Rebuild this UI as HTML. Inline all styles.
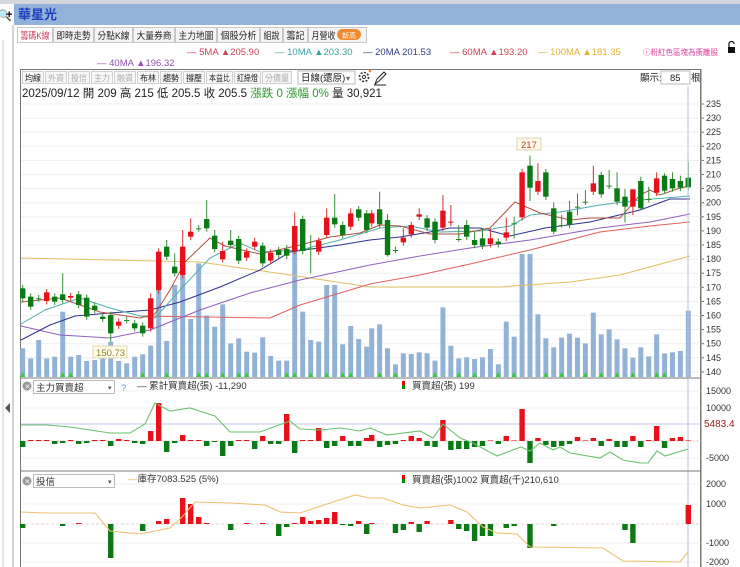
<!DOCTYPE html>
<html><head><meta charset="utf-8"><style>
html,body{margin:0;padding:0;background:#fff;}
svg{display:block;font-family:"Liberation Sans","Noto Sans CJK TC",sans-serif;}
</style></head><body>
<svg id="s" width="740" height="567" viewBox="0 0 740 567" xmlns="http://www.w3.org/2000/svg">
<rect width="740" height="567" fill="#fff"/>
<rect x="0" y="0" width="740" height="4" fill="#d4d6dc"/>
<rect x="0" y="4" width="740" height="21" fill="#93b2da"/>
<rect x="0" y="4" width="14" height="21" fill="#fff"/>
<text x="-2" y="19" font-size="11" fill="#333">🔍</text><text x="6" y="18" font-size="11" font-weight="bold" fill="#000">+</text>
<text x="18" y="19" font-size="13" font-weight="bold" fill="#1f3fbf">華星光</text>
<line x1="13" y1="25" x2="13" y2="567" stroke="#aaa"/>
<line x1="3" y1="40" x2="3" y2="567" stroke="#ccc"/>
<path d="M5 408 L10 403 L10 413 Z" fill="#555"/>
<g id="tabs" font-size="9.5"></g>
<g font-size="9.5">
<text x="187" y="55" fill="#d04050">—   5MA ▲205.90</text>
<text x="275" y="55" fill="#40a0a0">—   10MA ▲203.30</text>
<text x="363" y="55" fill="#303a8a">—   20MA 201.53</text>
<text x="450" y="55" fill="#d04050">—   60MA ▲193.20</text>
<text x="538" y="55" fill="#e0b030">—   100MA ▲181.35</text>
<text x="97" y="66" fill="#9050b0">—   40MA ▲196.32</text>
<text x="643" y="55" fill="#e040a0" font-size="8" textLength="75" lengthAdjust="spacingAndGlyphs">ⓘ粉紅色區塊為衝離股</text>
</g>
<rect x="728" y="47" width="7" height="6" fill="#111"/><path d="M729 47 V44 a2.5 2.5 0 0 1 5 0" fill="none" stroke="#111" stroke-width="1.2"/>
<rect x="20.5" y="69.5" width="680" height="500" fill="none" stroke="#777"/>
<g id="tool" font-size="8.5"></g>
<rect x="298" y="71" width="57" height="13" fill="#fff" stroke="#bbb"/>
<text x="301" y="81" font-size="9.5" fill="#222">日線(還原)</text><text x="346" y="81" font-size="8" fill="#666">▾</text>
<circle cx="364" cy="77" r="4.5" fill="none" stroke="#333" stroke-width="1.6" stroke-dasharray="2 1.5"/><circle cx="364" cy="77" r="1.6" fill="none" stroke="#333"/>
<circle cx="370" cy="71" r="1.3" fill="#f08020"/>
<path d="M375 84 L377 79 L384 72 L386 74 L379 81 Z M374 85 H386" fill="none" stroke="#222" stroke-width="1"/>
<text x="640" y="81" font-size="9.5" fill="#222">顯示:</text>
<rect x="661" y="71" width="29" height="13" fill="#fff" stroke="#bbb"/>
<text x="670" y="81" font-size="9.5" fill="#222">85</text><text x="691" y="81" font-size="9.5" fill="#222">根</text>
<text x="22" y="97" font-size="11.5" fill="#222">2025/09/12 開 209 高 215 低 205.5 收 205.5 <tspan fill="#2a9a2a">漲跌 0 漲幅 0%</tspan> 量 30,921</text>
<g id="grid"></g>
<g id="vol"></g>
<g id="ma" fill="none" stroke-width="1"></g>
<g id="cdl"></g>
<line x1="688" y1="86" x2="688" y2="567" stroke="#b8c4d8"/>
<line x1="701" y1="69" x2="701" y2="567" stroke="#777"/>
<line x1="20" y1="378" x2="701" y2="378" stroke="#777"/>
<line x1="20" y1="471" x2="701" y2="471" stroke="#777"/>
<g id="ax" font-size="9" fill="#333"></g>
<g id="p2"></g>
<g id="p3"></g>
<rect x="93" y="346" width="34" height="12" fill="#fffbe8" stroke="#e0d8b0"/><text x="96" y="356" font-size="9.5" fill="#8a8a30">150.73</text>
<rect x="517" y="138" width="24" height="12" fill="#fffbe8" stroke="#e0d0b0"/><text x="521" y="148" font-size="9.5" fill="#c04030">217</text>
<circle cx="27" cy="386" r="4.5" fill="#999"/><text x="24.5" y="389" font-size="7" fill="#fff">✕</text>
<rect x="33.5" y="380.5" width="81" height="13" fill="#fff" stroke="#bbb"/><text x="36" y="391" font-size="9.5" fill="#333">主力買賣超</text><text x="108" y="390" font-size="7" fill="#555">▾</text>
<text x="121" y="391" font-size="9.5" fill="#6a9ad0">?</text>
<text x="137" y="389" font-size="9.5" fill="#333">— 累計買賣超(張) -11,290</text>
<rect x="402" y="381" width="3" height="4" fill="#e00"/><rect x="402" y="385" width="3" height="4" fill="#080"/>
<text x="412" y="389" font-size="9.5" fill="#333">買賣超(張) 199</text>
<circle cx="27" cy="481" r="4.5" fill="#999"/><text x="24.5" y="484" font-size="7" fill="#fff">✕</text>
<rect x="33.5" y="474.5" width="81" height="13" fill="#fff" stroke="#bbb"/><text x="36" y="485" font-size="9.5" fill="#333">投信</text><text x="108" y="484" font-size="7" fill="#555">▾</text>
<text x="128" y="482" font-size="9.5" fill="#333"><tspan fill="#e0b040">—</tspan>庫存7083.525 (5%)</text>
<rect x="402" y="475" width="3" height="4" fill="#e00"/><rect x="402" y="479" width="3" height="4" fill="#080"/>
<text x="412" y="483" font-size="9.5" fill="#333">買賣超(張)1002 買賣超(千)210,610</text>
</svg>
<script>
const NS='http://www.w3.org/2000/svg';
function add(g,tag,a,txt){const e=document.createElementNS(NS,tag);for(const k in a)e.setAttribute(k,a[k]);if(txt)e.textContent=txt;document.getElementById(g).appendChild(e);return e;}
const tabs=[["籌碼K線",17,53],["即時走勢",53,94],["分點K線",94,133],["大量券商",133,175],["主力地圖",175,217],["個股分析",217,260],["組說",260,283],["籌記",283,308],["月營收",308,367]];
tabs.forEach((t,i)=>{add('tabs','rect',{x:t[1]+.5,y:27.5,width:t[2]-t[1]-1,height:15,fill:i?'#f5f5f5':'#fff',stroke:'#c8c8c8'});
const w=i==8?24:(t[2]-t[1]-7);
add('tabs','text',{x:t[1]+3.5,y:39,fill:i?'#222':'#d04060',textLength:w,lengthAdjust:'spacingAndGlyphs'},t[0]);});
add('tabs','rect',{x:337,y:29,width:24,height:11,rx:5.5,fill:'#f08a30'});add('tabs','text',{x:342,y:38,fill:'#fff','font-size':7},'新高');
const tb=[["均線",22,44,1],["外資",45,67,0],["投信",68,90,0],["主力",91,113,0],["融資",114,136,0],["布林",137,159,1],["趨勢",160,182,1],["撐壓",183,205,1],["本益比",206,233,1],["紅綠燈",234,261,1],["分價量",262,292,0]];
tb.forEach(t=>{add('tool','rect',{x:t[1]+.5,y:71.5,width:t[2]-t[1]-1,height:12,fill:'#f7f7f7',stroke:'#d0d0d0'});add('tool','text',{x:t[1]+3,y:81,fill:t[3]?'#222':'#aaa',textLength:t[2]-t[1]-6,lengthAdjust:'spacingAndGlyphs'},t[0]);});
const py=p=>104+(235-p)*2.82;
for(let p=140;p<=235;p+=5){const y=py(p);add('grid','line',{x1:21,x2:701,y1:y,y2:y,stroke:'#f0f0f0'});add('ax','line',{x1:701,x2:704,y1:y,y2:y,stroke:'#777'});add('ax','text',{x:706,y:y+3},p);}
[[15000,391],[10000,408],[0,441],[-5000,458]].forEach(a=>add('ax','text',{x:706,y:a[1]+3},a[0]));
add('ax','text',{x:704,y:427,fill:'#a02020','font-size':10},'5483.4');
[[2000,484],[1000,504],[0,524],[-1000,543],[-2000,562]].forEach(a=>add('ax','text',{x:706,y:a[1]+3},a[0]));
[391,408,441,458].forEach(y=>add('grid','line',{x1:21,x2:701,y1:y,y2:y,stroke:'#f0f0f0'}));
add('grid','line',{x1:21,x2:701,y1:424,y2:424,stroke:'#c0c8e8'});
[484,504,543,562].forEach(y=>add('grid','line',{x1:21,x2:701,y1:y,y2:y,stroke:'#f0f0f0'}));
add('grid','line',{x1:21,x2:701,y1:524,y2:524,stroke:'#e8d0d0','stroke-dasharray':'3 2'});
add('grid','line',{x1:21,x2:701,y1:441,y2:441,stroke:'#e8d0d0','stroke-dasharray':'3 2'});
const X=k=>k<44?22.7+8*k:371.7+7.915*(k-44);
const Z=z=>95+z/3;
const C=[['g',580,610],['g',605,635],['d',610],['r',592,618],['g',605,620],['g',598,615,535],['r',603,608],['g',598,630],['g',608,665],['g',632,645],['g',665,672],['g',660,715,650,740],['r',680,692],['d',675],['g',685,700],['g',692,715],['r',610,700,595],['r',470,585],['g',455,485,435],['g',515,535,475],['r',455,540,405],['r',410,425,370],['d',400],['g',372,400,315],['g',422,462,405],['r',468,493,440],['g',437,450,405],['g',432,497],['r',470,488],['r',440,455,428],['g',452,505],['r',473,497],['g',465,480],['g',462,482,450],['r',393,468,352],['g',372,468],['d',460,460,420,535],['r',437,470],['r',368,420,340],['g',368,388,297],['g',390,420],['r',355,395,340],['g',343,368],['g',355,405],
['r',355,385],['g',343,388,290],['g',375,480,357,485],['d',465],['r',428,442,400],['r',390,418],['r',358,365,340],['g',370,398],['g',380,435],['r',347,398,300],['r',380,383,330],['d',432,432,390,440],['g',390,425,375],['g',435,450,410],['g',430,452,400],['r',430,447,402],['g',440,447],['r',412,428,368],['d',385,385,365,430],['r',232,367],['g',212,278,182,318],['r',258,290,205],['g',232,305],['g',340,410,322,418],['d',390,390,360,398],['g',350,390,318],['d',335,335,295,360],['d',320,320,285],['r',265,290,212],['g',240,298],['d',272,272,225],['g',280,320,232],['g',305,335,282,382],['r',283,335,283,360],['g',258,340,245,345],['d',312,312,275],['r',250,293,232],['g',242,287,235],['g',252,280,232],['g',258,278,242],['g',248,277,200]];
const V=[760,790,735,790,785,650,785,780,798,795,790,740,798,805,785,778,752,550,738,570,515,672,505,662,695,628,745,730,770,773,727,783,797,797,460,650,735,740,570,570,748,693,732,755,700,688,760,808,775,777,772,775,797,637,752,790,787,792,787,762,808,680,725,477,477,658,730,757,728,716,728,745,653,718,703,733,760,788,757,784,718,775,772,768,647];
V.forEach((v,k)=>{const y=Z(v);add('vol','rect',{x:X(k)-2.5,y:y,width:5,height:377-y,fill:'#93b3d6'});});
[0,5,6,15,18,22,23,25,27,28,33,34,36,38,40,41,45,47,52,55,57,60,62,66,68,71,73,75,77,80,81].forEach(k=>add('vol','path',{d:`M${X(k)-2.5} 377 L${X(k)} 372 L${X(k)+2.5} 377Z`,fill:'#30d030'}));
C.forEach((c,k)=>{const x=X(k);let t=c[1],b=c[2]===undefined?c[1]:c[2];let hi=c[3]!==undefined?c[3]:t-10,lo=c[4]!==undefined?c[4]:b+10;
const col=c[0]=='r'?'#e8101a':(c[0]=='g'?'#0a7a14':'#2a8a2a');const wc=c[0]=='r'?'#d03030':'#3a8a3a';
add('cdl','line',{x1:x,x2:x,y1:Z(hi),y2:Z(lo),stroke:wc,'stroke-width':1});
add('cdl','rect',{x:x-2.7,y:Z(t),width:5.4,height:Math.max(1,(b-t)/3),fill:col});});
const MA=[['#e0c060',[[21,258],[200,262],[290,275],[370,287],[500,287],[570,282],[620,275],[690,256]]],
['#e06060',[[140,316],[270,318],[300,305],[370,284],[420,275],[470,264],[530,250],[600,232],[650,226],[690,222]]],
['#9060c0',[[21,326],[60,335],[110,338],[150,330],[200,310],[250,293],[300,280],[370,265],[420,256],[470,248],[530,240],[600,228],[650,222],[690,214]]],
['#303090',[[21,340],[50,325],[75,316],[110,313],[150,310],[180,302],[220,287],[260,270],[290,252],[340,245],[370,240],[400,237],[430,232],[450,228],[480,228],[510,236],[545,228],[590,222],[640,210],[670,199],[690,199]]],
['#50b0b0',[[21,324],[45,310],[80,298],[110,308],[140,316],[155,318],[180,290],[210,258],[240,243],[260,252],[300,250],[340,240],[380,228],[410,226],[440,232],[480,231],[510,226],[530,215],[560,212],[600,205],[640,200],[690,196]]],
['#b05040',[[21,302],[60,298],[100,312],[140,318],[155,314],[170,290],[185,262],[210,238],[225,246],[260,254],[300,245],[330,237],[360,233],[380,225],[400,226],[430,234],[460,234],[490,228],[515,202],[540,213],[570,220],[590,218],[620,218],[640,195],[650,190],[660,195],[680,188],[690,186]]]];
MA.forEach(m=>add('ma','polyline',{points:m[1].map(p=>p.join(',')).join(' '),stroke:m[0]}));
const P2=[-6,1,1,1,-3,-2,1,-3,-2,1,1,-5,2,1,-2,-3,10,38,-11,-2,6,1,1,-5,-1,-15,-5,1,1,-8,5,-3,-3,27,-12,1,1,13,-7,-5,5,-5,-5,3,6,-6,-4,-3,1,5,3,-5,-6,21,-9,-8,-8,-6,-5,.6,-3,5,.6,32,-22,3,-4,-6,-5,-3,4,.6,3,-5,2,-6,-6,5,-6,1,15,-7,3,4,.6];
P2.forEach((v,k)=>{const x=X(k);add('p2','rect',{x:x-2.7,y:v>0?441-v:441,width:5.4,height:Math.abs(v),fill:v>0?'#e8101a':'#0a7a14'});});
add('p2','polyline',{points:'21,425 47,425 70,427 90,430 110,433 130,433 145,424 155,403 170,411 190,408 215,416 230,432 260,432 290,421 300,429 320,430 340,428 360,431 370,428 387,435 420,431 433,438 443,424 460,438 473,443 497,456 510,451 521,447 530,451 540,443 553,450 560,447 570,453 600,458 610,452 623,460 640,463 648,463 657,451 665,456 688,449',fill:'none',stroke:'#6cc070','stroke-width':1.1});
const P3={0:-4,5:-2,7:1,11:-34,15:-7,17:3,18:5,20:26,21:20,22:7,23:1,26:-6,28:1,30:1,32:-12,33:-3,34:1,35:7,36:3,37:4,38:6,39:12,40:-1,41:-2,42:3,43:-10,44:1,47:-9,48:-6,49:2,50:-8,51:3,54:4,55:-5,56:-7,57:-17,58:-12,59:-12,61:-4,62:-2,64:-24,67:-2,76:-6,77:-19,84:19};
for(const k in P3){const v=P3[k],x=X(+k);add('p3','rect',{x:x-2.7,y:v>0?524-v:524,width:5.4,height:Math.abs(v),fill:v>0?'#e8101a':'#0a7a14'});}
add('p3','polyline',{points:'21,512 45,513 95,513 110,531 140,534 170,528 182,517 195,502 230,503 265,505 280,512 300,513 330,503 355,495 370,498 383,498 403,505 420,508 430,507 450,505 467,512 483,527 497,533 517,534 530,547 603,548 623,561 680,562 688,552',fill:'none',stroke:'#eec070','stroke-width':1.1});
</script>
</body></html>
